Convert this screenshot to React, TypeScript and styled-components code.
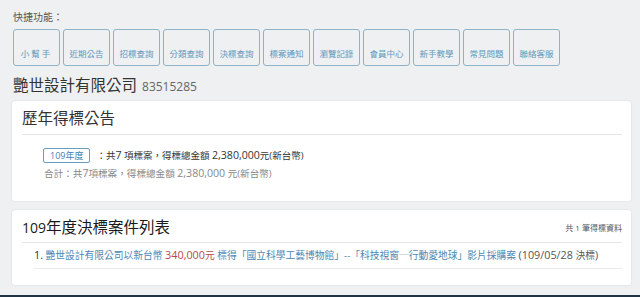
import React from 'react';
import styled, { createGlobalStyle } from 'styled-components';

const GlobalStyle = createGlobalStyle`
  html, body {
    margin: 0;
    padding: 0;
    background: #eef0f2;
    font-family: "Open Sans", "Noto Sans CJK TC", sans-serif;
    color: #333;
  }
`;

const Page = styled.div`
  width: 640px;
  height: 297px;
  box-sizing: border-box;
  padding: 9px 9px 0 12px;
  overflow: hidden;
  position: relative;
`;

const QuickLabel = styled.div`
  font-size: 10px;
  color: #555;
  line-height: 16px;
  margin-left: 1px;
`;

const QuickRow = styled.div`
  display: flex;
  gap: 3px;
  margin-top: 4px;
  margin-left: 1px;
`;

const QuickButton = styled.a<{ $spaced?: boolean }>`
  width: 47px;
  height: 37px;
  box-sizing: border-box;
  border: 1.5px solid #8fb3c6;
  border-radius: 3px;
  display: flex;
  align-items: flex-end;
  justify-content: center;
  padding-bottom: 6px;
  font-size: 8.5px;
  color: #6298bb;
  letter-spacing: ${({ $spaced }) => ($spaced ? '2px' : '0')};
  white-space: nowrap;
`;

const CompanyLine = styled.div`
  display: flex;
  align-items: baseline;
  gap: 5px;
  margin: 8px 0 0 1px;
`;

const CompanyName = styled.h1`
  margin: 0;
  font-size: 15.5px;
  font-weight: 400;
  color: #333;
  line-height: 22px;
`;

const CompanyId = styled.span`
  font-size: 12px;
  color: #666;
`;

const Card = styled.section<{ $top: number; $h: number }>`
  background: #fff;
  border-radius: 3px;
  box-shadow: 0 0 2px rgba(0, 0, 0, 0.12);
  padding: 0 9px 0 10px;
  margin-top: ${({ $top }) => $top}px;
  width: 600px;
  height: ${({ $h }) => $h}px;
`;

const CardHead = styled.div<{ $h: number }>`
  display: flex;
  justify-content: space-between;
  align-items: center;
  border-bottom: 1px solid #e4e6e8;
  height: ${({ $h }) => $h}px;
`;

const CardTitle = styled.h2<{ $dark?: boolean }>`
  margin: 0;
  font-size: 15.5px;
  font-weight: 400;
  color: ${({ $dark }) => ($dark ? '#1a1a1a' : '#333')};
`;

const TitleNum = styled.span`
  font-size: 14px;
`;

const CountNote = styled.span`
  font-size: 8px;
  color: #555;
  align-self: flex-start;
  margin-top: 12px;
`;

const YearBody = styled.div`
  padding: 12px 0 0 21px;
`;

const YearLine = styled.div`
  display: flex;
  align-items: center;
  font-size: 9.5px;
  color: #333;
  height: 16px;
  white-space: pre;
`;

const YearBadge = styled.span`
  border: 1.5px solid #6a9dc2;
  border-radius: 2px;
  padding: 0 6px;
  color: #3f7fb3;
  font-size: 9px;
  line-height: 13px;
  margin-right: 6px;
`;

const TotalLine = styled.div`
  font-size: 9.6px;
  color: #888;
  margin-top: 3px;
  margin-left: 1px;
  white-space: pre;
`;

const Num = styled.span`
  font-size: 10.6px;
`;

const List = styled.ol`
  margin: 0;
  padding: 0 0 0 12px;
  list-style: none;
`;

const Item = styled.li`
  font-size: 9.75px;
  color: #333;
  line-height: 24px;
  border-bottom: 1px solid #e8eaec;
  white-space: nowrap;
`;

const ItemNum = styled.span`
  font-size: 10.8px;
`;

const Link = styled.a`
  color: #4b86b4;
`;

const Money = styled.span`
  color: #b94a48;
`;

const DateText = styled.span`
  color: #555;
`;

const BottomBar = styled.div`
  position: absolute;
  left: 0;
  right: 0;
  bottom: 0;
  height: 2px;
  background: #1f3344;
`;

const quickLinks = [
  { label: '小幫手', spaced: true },
  { label: '近期公告' },
  { label: '招標查詢' },
  { label: '分類查詢' },
  { label: '決標查詢' },
  { label: '標案通知' },
  { label: '瀏覽記錄' },
  { label: '會員中心' },
  { label: '新手教學' },
  { label: '常見問題' },
  { label: '聯絡客服' },
];

export default function App() {
  return (
    <Page>
      <GlobalStyle />
      <QuickLabel>快捷功能：</QuickLabel>
      <QuickRow>
        {quickLinks.map((q) => (
          <QuickButton key={q.label} $spaced={q.spaced}>
            {q.label}
          </QuickButton>
        ))}
      </QuickRow>
      <CompanyLine>
        <CompanyName>艷世設計有限公司</CompanyName>
        <CompanyId>83515285</CompanyId>
      </CompanyLine>

      <Card $top={5} $h={100}>
        <CardHead $h={33}>
          <CardTitle>歷年得標公告</CardTitle>
        </CardHead>
        <YearBody>
          <YearLine>
            <YearBadge>109年度</YearBadge>：共<Num>7</Num> 項標案，得標總金額 <Num>2,380,000</Num>元(新台幣)
          </YearLine>
          <TotalLine>
            合計：共<Num>7</Num>項標案，得標總金額 <Num>2,380,000</Num> 元(新台幣)
          </TotalLine>
        </YearBody>
      </Card>

      <Card $top={9} $h={75}>
        <CardHead $h={32}>
          <CardTitle $dark>
            <TitleNum>109</TitleNum>年度決標案件列表
          </CardTitle>
          <CountNote>共 1 筆得標資料</CountNote>
        </CardHead>
        <List>
          <Item>
            <ItemNum>1.</ItemNum> <Link>艷世設計有限公司以新台幣</Link>{' '}
            <Money>
              <ItemNum>340,000</ItemNum>元
            </Money>{' '}
            <Link>標得「國立科學工藝博物館」--「科技視窗─行動愛地球」影片採購案</Link>{' '}
            <DateText>
              <ItemNum>(109/05/28</ItemNum> 決標<ItemNum>)</ItemNum>
            </DateText>
          </Item>
        </List>
      </Card>
      <BottomBar />
    </Page>
  );
}
